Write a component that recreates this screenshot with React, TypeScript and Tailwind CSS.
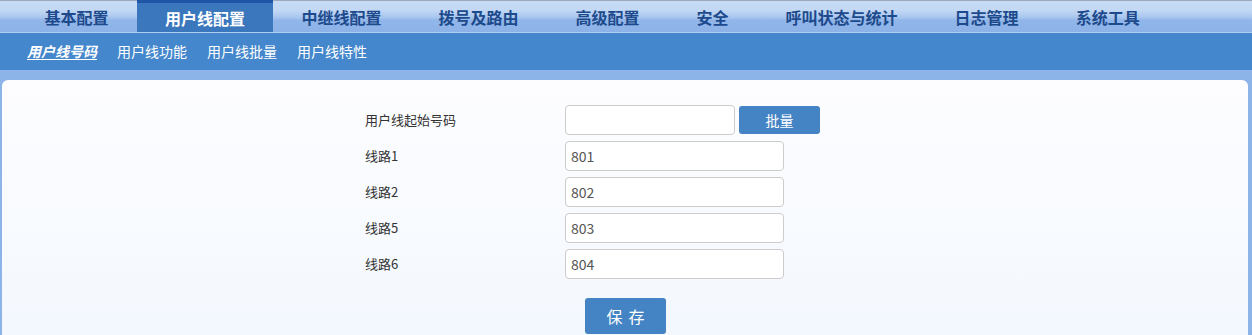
import React from "react";

const tabs = ["基本配置", "用户线配置", "中继线配置", "拨号及路由", "高级配置", "安全", "呼叫状态与统计", "日志管理", "系统工具"];
const subs = ["用户线号码", "用户线功能", "用户线批量", "用户线特性"];
const lines = [
  { label: "线路1", value: "801" },
  { label: "线路2", value: "802" },
  { label: "线路5", value: "803" },
  { label: "线路6", value: "804" },
];

const font = { fontFamily: '"Noto Sans CJK SC", "Noto Sans", sans-serif' };

export default function App() {
  return (
    <div className="w-[1252px] h-[335px] overflow-hidden bg-[#8db4e8] flex flex-col" style={font}>
      {/* top nav */}
      <div className="h-[33px] border-t border-[#a0a8b8] bg-[linear-gradient(to_bottom,#c6dbf5_0%,#c2d8f4_28%,#b6d0f2_40%,#a6c5ee_52%,#91b6e9_60%,#8cb2e8_96%,#aecbf0_97%)] flex pl-[16px]">
        {tabs.map((t, i) =>
          i === 1 ? (
            <div key={t} className="h-full px-[28px] bg-[#3b77bc] border-t-[3px] border-[#1f57a6] -mt-px flex items-center text-white font-bold text-[16px]">
              {t}
            </div>
          ) : (
            <div key={t} className="h-full px-[28.5px] flex items-center text-[#1d4a8c] font-bold text-[16px]">
              {t}
            </div>
          )
        )}
      </div>
      {/* sub nav */}
      <div className="h-[37px] bg-[#4487cc] flex items-center pl-[27px] gap-[20px] text-white text-[14px]">
        {subs.map((s, i) => (
          <span key={s} className={i === 0 ? "font-bold italic underline underline-offset-2" : ""}>
            {s}
          </span>
        ))}
      </div>
      <div className="h-[10px]" />
      {/* panel */}
      <div className="flex-1 ml-[2px] mr-[4px] rounded-t-[6px] bg-[linear-gradient(to_bottom,#fdfdff,#f3f8fe)] pt-[25px] pl-[363px] text-[13px] text-[#333]">
        <div className="flex items-center h-[30px]">
          <span className="w-[200px]">用户线起始号码</span>
          <div className="w-[170px] h-[30px] rounded-[4px] border border-[#ccc] bg-white" />
          <button className="ml-[4px] w-[81px] h-[28px] rounded-[3px] bg-[#4584c4] text-white text-[14px]">批量</button>
        </div>
        {lines.map((l) => (
          <div key={l.label} className="flex items-center h-[30px] mt-[6px]">
            <span className="w-[200px]">{l.label}</span>
            <div className="w-[219px] h-[30px] rounded-[4px] border border-[#ccc] bg-white pl-[5px] flex items-center text-[14px] text-[#555]">
              {l.value}
            </div>
          </div>
        ))}
        <div className="pl-[220px] mt-[19px]">
          <button className="w-[81px] h-[36px] rounded-[3px] bg-[#4584c4] text-white text-[16px] tracking-[6px] pl-[6px]">保存</button>
        </div>
      </div>
    </div>
  );
}
